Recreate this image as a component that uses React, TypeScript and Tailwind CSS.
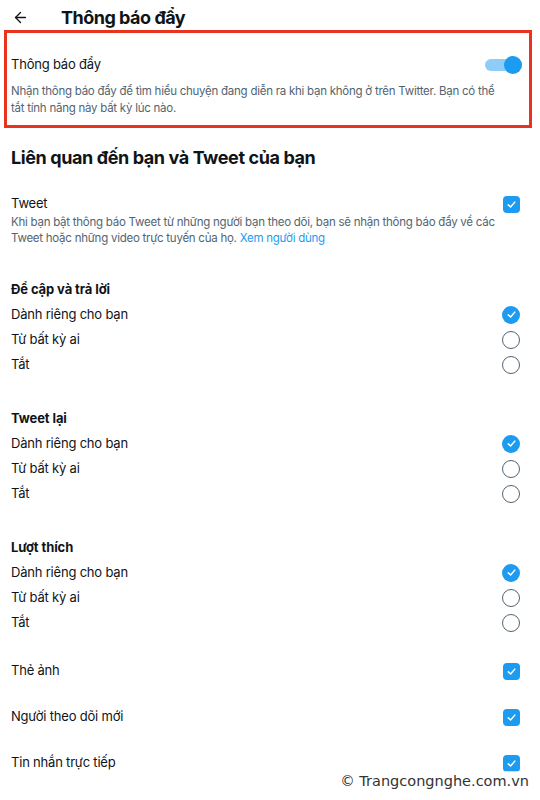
import React from 'react';
import { ArrowLeft } from 'lucide-react';

// Small check mark used inside checkbox / radio
const CheckMark: React.FC<{ size?: number }> = ({ size = 11 }) => (
  <svg width={size} height={size} viewBox="0 0 12 12" fill="none">
    <path d="M2.5 6.4 L5 8.8 L9.6 3.4" stroke="white" strokeWidth="1.6" strokeLinecap="round" strokeLinejoin="round" />
  </svg>
);

const Checkbox: React.FC = () => (
  <div className="w-[17px] h-[17px] rounded-[4px] bg-[#1d9bf0] flex items-center justify-center">
    <CheckMark />
  </div>
);

const Radio: React.FC<{ checked?: boolean }> = ({ checked }) =>
  checked ? (
    <div className="w-[18px] h-[18px] rounded-full bg-[#1d9bf0] flex items-center justify-center">
      <CheckMark />
    </div>
  ) : (
    <div className="w-[18px] h-[18px] rounded-full border-[1.5px] border-[#536471]" />
  );

const Toggle: React.FC = () => (
  <div className="relative w-[37px] h-[18px] flex items-center">
    <div className="w-full h-[12px] rounded-full bg-[#8ecdf8]" />
    <div className="absolute right-0 top-0 w-[18px] h-[18px] rounded-full bg-[#1d9bf0]" />
  </div>
);

// Group of radio options with a bold header
interface RadioGroupProps {
  title: string;
  className?: string;
}

const RadioGroup: React.FC<RadioGroupProps> = ({ title, className = '' }) => {
  const options = ['Dành riêng cho bạn', 'Từ bất kỳ ai', 'Tắt'];
  return (
    <div className={className}>
      <div className="h-[25px] flex items-center text-[13px] font-bold text-[#0f1419] tracking-[-0.1px]">{title}</div>
      {options.map((opt, i) => (
        <div key={opt} className="h-[25px] flex items-center justify-between pr-[20px]">
          <span className="text-[13px] tracking-[-0.2px] text-[#0f1419]">{opt}</span>
          <Radio checked={i === 0} />
        </div>
      ))}
    </div>
  );
};

const CheckRow: React.FC<{ label: string }> = ({ label }) => (
  <div className="h-[46px] flex items-center justify-between pr-[20px]">
    <span className="text-[13px] tracking-[-0.2px] text-[#0f1419]">{label}</span>
    <Checkbox />
  </div>
);

export default function App() {
  return (
    <div
      className="relative w-[540px] h-[800px] overflow-hidden bg-white"
      style={{ fontFamily: 'Inter, "Noto Sans", sans-serif' }}
    >
      {/* Header */}
      <div className="h-[30px] pt-[5px] flex items-center">
        <ArrowLeft className="ml-[12px] text-[#0f1419]" size={17} strokeWidth={1.8} />
        <h1 className="ml-[32px] text-[18px] font-bold text-[#0f1419] tracking-[-0.5px]">Thông báo đẩy</h1>
      </div>

      {/* Highlighted push toggle */}
      <div className="ml-[4px] w-[528px] border-[3px] border-[#e8341c] pt-[22px] pb-[8px] pl-[4px] pr-[7px]">
        <div className="h-[20px] flex items-center justify-between">
          <span className="text-[13px] tracking-[-0.2px] text-[#0f1419]">Thông báo đẩy</span>
          <Toggle />
        </div>
        <p className="mt-[8px] text-[11.5px] tracking-[-0.25px] leading-[17px] text-[#536471] pr-[14px]">
          Nhận thông báo đẩy để tìm hiểu chuyện đang diễn ra khi bạn không ở trên Twitter. Bạn có thể tắt tính năng này bất kỳ lúc nào.
        </p>
      </div>

      <div className="pl-[11px]">
        <h2 className="mt-[17px] h-[24px] flex items-center text-[18px] font-bold text-[#0f1419] tracking-[-0.4px]">
          Liên quan đến bạn và Tweet của bạn
        </h2>

        {/* Tweet */}
        <div className="mt-[25px] h-[20px] flex items-center justify-between pr-[20px]">
          <span className="text-[13px] tracking-[-0.2px] text-[#0f1419]">Tweet</span>
          <Checkbox />
        </div>
        <p className="mt-0 text-[11.5px] tracking-[-0.25px] leading-[16px] text-[#536471] pr-[30px]">
          Khi bạn bật thông báo Tweet từ những người bạn theo dõi, bạn sẽ nhận thông báo đẩy về các Tweet hoặc những video trực tuyến của họ.{' '}
          <span className="text-[#1d9bf0]">Xem người dùng</span>
        </p>

        <RadioGroup title="Để cập và trả lời" className="mt-[31px]" />
        <RadioGroup title="Tweet lại" className="mt-[29px]" />
        <RadioGroup title="Lượt thích" className="mt-[29px]" />

        <div className="mt-[13px]">
          <CheckRow label="Thẻ ảnh" />
          <CheckRow label="Người theo dõi mới" />
          <CheckRow label="Tin nhắn trực tiếp" />
        </div>
      </div>

      {/* Watermark */}
      <div
        className="absolute right-[9px] bottom-[7px] text-[14.5px] text-[#333] bg-white/70 px-[2px]"
        style={{ fontFamily: '"DejaVu Sans", sans-serif' }}
      >
        © Trangcongnghe.com.vn
      </div>
    </div>
  );
}
